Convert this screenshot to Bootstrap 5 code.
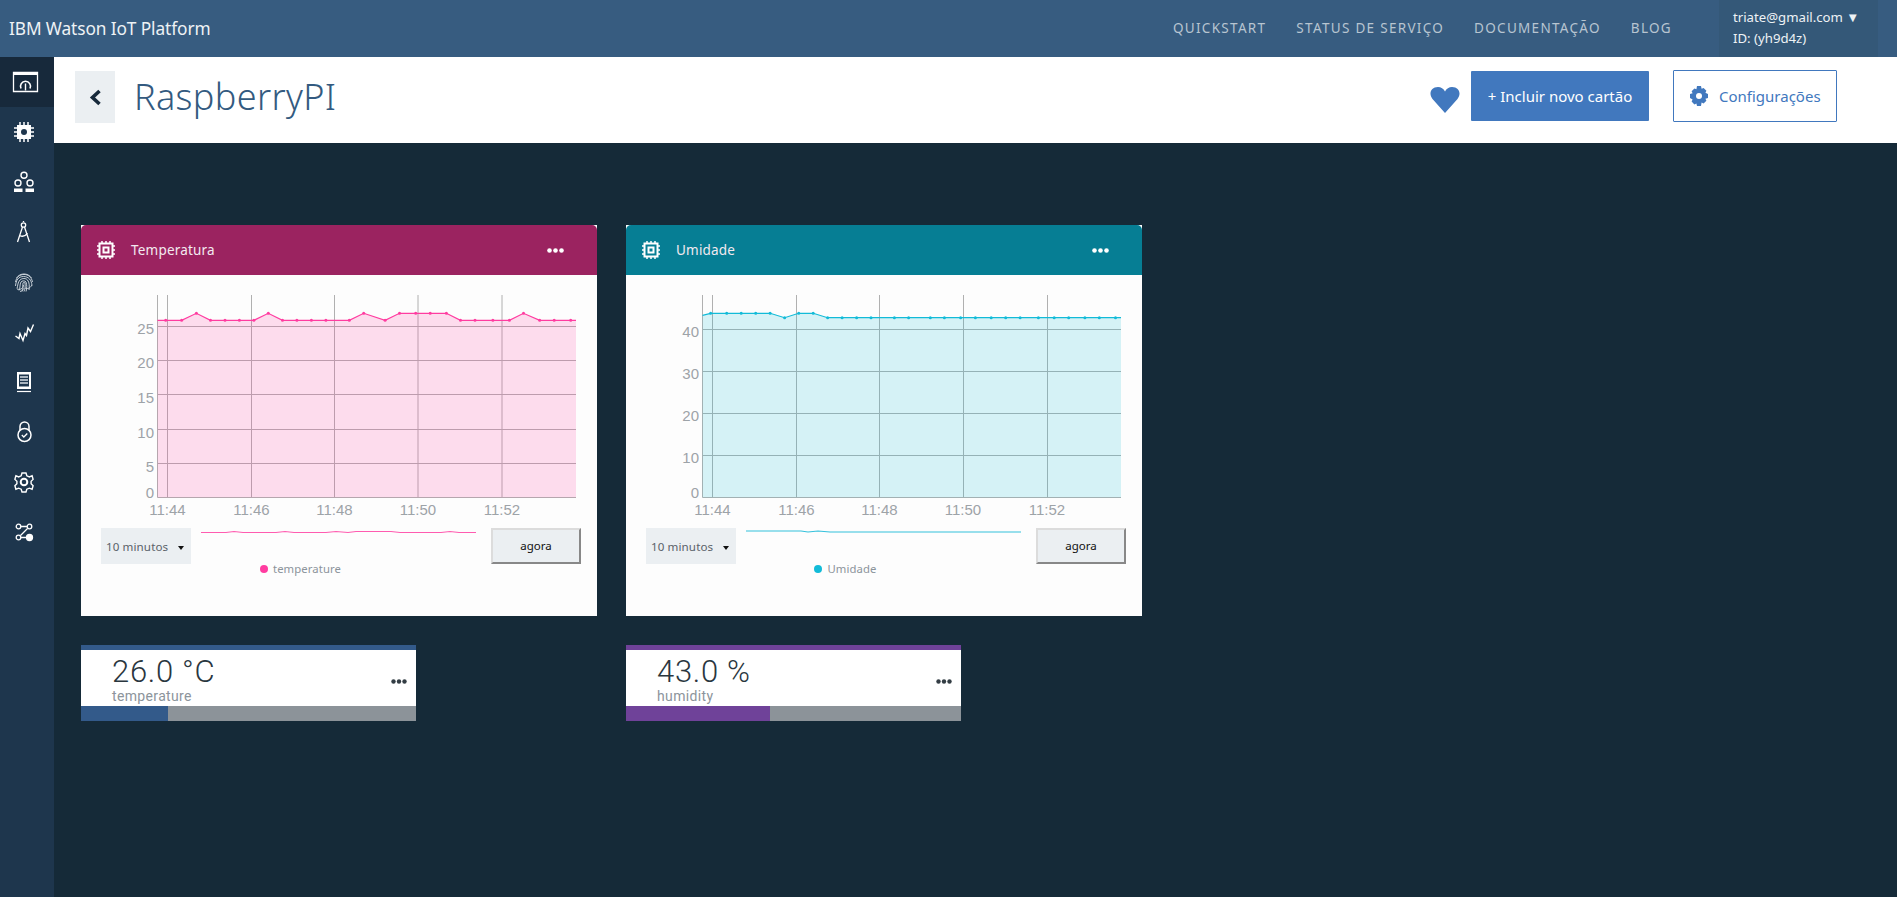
<!DOCTYPE html>
<html lang="pt-BR">
<head>
<meta charset="utf-8">
<title>RaspberryPI - IBM Watson IoT Platform</title>
<link rel="stylesheet" href="https://cdn.jsdelivr.net/npm/bootstrap@5.3.0/dist/css/bootstrap.min.css">
<script src="https://cdn.jsdelivr.net/npm/bootstrap@5.3.0/dist/js/bootstrap.bundle.min.js"></script>
<style>
html,body{height:100%}
body{background:#152a38;font-family:"Noto Sans",Roboto,sans-serif;overflow:hidden;color:#2d3a42}
.topbar{height:57px;background:#375c80;padding:0 19px 0 9px;flex-wrap:nowrap}
.topbar .navbar-brand{color:#eef2f5;font-size:17.3px;padding:0;margin:0;line-height:1;letter-spacing:-.1px}
.topnav{gap:30px;flex-direction:row;margin-right:47px}
.topnav .nav-link{color:#b8c5d1;font-size:13.5px;letter-spacing:1.3px;padding:0;line-height:1}
.userbox{width:159px;height:57px;background:#345878;color:#eef2f5;font-size:13.2px;line-height:21px;padding:7px 0 0 14px;white-space:nowrap}
.shell{height:840px}
.sidebar{width:54px;background:#1e364d;flex:none}
.sideitem{height:50px;padding-right:4px;display:flex;align-items:center;justify-content:center}
.sideitem.on{background:#17293b}
.sideitem svg{width:28px;height:24px;display:block}
.pagehead{height:86px;background:#fff;padding:14px 60px 0 21px;border:0}
.backbtn{width:40px;height:52px;background:#ebeff2;border:0;border-radius:0;padding:0;display:flex;align-items:center;justify-content:center}
.pagetitle{font-size:36px;line-height:52px;font-weight:300;color:#335a80;margin:0 0 0 19px;letter-spacing:.35px}
.heartmark{width:30px;height:26px;margin-right:11px;margin-top:16px}
.addbtn{width:178px;height:50px;background:#4178be;border:0;border-radius:1px;color:#fff;font-size:15px;padding:0}
.cfgbtn{width:164px;height:52px;background:#fff;border:1px solid #4178be;border-radius:1px;color:#4178be;font-size:15px;padding:0 0 0 15px;margin-left:24px;margin-top:-1px;justify-content:flex-start;gap:10px;white-space:nowrap}
.board{display:grid;grid-template-columns:516px 516px;gap:29px;padding:82px 0 0 27px;align-content:start}
.chartcard{height:391px;background:#fdfdfd;border:0;border-radius:0}
.cardtop{height:50px;color:#f3eaf0;font-size:13.5px;padding:0 0 0 16px;border:0;border-radius:0;letter-spacing:.2px}
.cardtop.rose{background:#9b2360}
.cardtop.teal{background:#067e94}
.cardtop .chipmark{width:18px;height:18px;margin-right:16px}
.dotsmark{width:17px;height:5px;margin:0 33px 0 auto;flex:none}
.plotarea{display:block;width:516px;height:253px}
.plotarea text{font-family:"Liberation Sans",Arial,sans-serif;font-size:15px;fill:#9da3a8}
.tick-y{text-anchor:end}
.tick-x{text-anchor:middle}
.rangerow{padding:0 0 0 20px;gap:10px;height:36px}
.rangepick{width:90px;height:36px;background:#ebeff2;font-size:11.6px;color:#5a6269;padding:1px 0 0 5px;position:relative;line-height:35px;letter-spacing:.1px}
.rangepick:after{content:"";position:absolute;right:7px;top:18px;border:3.5px solid transparent;border-top:4px solid #111;border-bottom:0}
.minimap{width:275px;height:8px;display:block;margin-right:5px}
.nowbtn{width:90px;height:36px;background:#ebeff2;border:2px solid;border-color:#dcdcdc #888 #888 #dcdcdc;border-radius:0;color:#111;font-size:11.5px;padding:0}
.legendline{padding-right:77px;height:10px;font-size:11.3px;line-height:10px;color:#8c949b;letter-spacing:.1px}
.legendline i{width:8px;height:8px;border-radius:50%;display:inline-block;margin-right:5px}
.statcard{width:335px;height:76px;background:#fff;border:0;border-radius:0}
.statline{height:5px}
.statbody{height:56px;padding:0 9px 0 31px}
.statvalue{font-family:Roboto,"Noto Sans",sans-serif;font-size:31px;line-height:29px;font-weight:300;color:#2a363e;margin-top:7px;letter-spacing:.7px}
.statname{font-family:Roboto,"Noto Sans",sans-serif;font-size:14px;line-height:17px;color:#8c949b;letter-spacing:.35px;margin-top:2px}
.statdots{width:16px;height:5px;margin:0;align-self:center;margin-top:6px;flex:none}
.statbar{height:15px;background:#8c9399;border-radius:0}
</style>
</head>
<body>
<nav class="navbar topbar justify-content-between">
  <a class="navbar-brand" href="#">IBM Watson IoT Platform</a>
  <div class="d-flex align-items-center">
    <ul class="nav topnav">
      <li class="nav-item"><a class="nav-link" href="#">QUICKSTART</a></li>
      <li class="nav-item"><a class="nav-link" href="#">STATUS DE SERVIÇO</a></li>
      <li class="nav-item"><a class="nav-link" href="#">DOCUMENTAÇÃO</a></li>
      <li class="nav-item"><a class="nav-link" href="#">BLOG</a></li>
    </ul>
    <div class="userbox">triate@gmail.com ▼<br>ID: (yh9d4z)</div>
  </div>
</nav>
<div class="d-flex shell">
  <aside class="sidebar">
    <div class="sideitem on"><svg viewBox="0 0 28 24" fill="none" stroke="#fff"><path d="M2.500 2.500h24v19h-24z" stroke-width="1.300"/><path d="M2 3.500h25" stroke-width="3"/><path d="M10 18.500a5 5 0 1 1 9 0" stroke-width="1.600"/><path d="M14.500 13.500v7" stroke-width="1.400"/></svg></div>
    <div class="sideitem"><svg viewBox="0 0 28 24" fill="none" stroke="#fff"><path d="M9 2v20M13 2v20M17 2v20M3 8h20M3 12h20M3 16h20" stroke-width="1.500"/><rect x="6" y="5" width="14" height="14" fill="#fff" stroke="none"/><circle cx="13" cy="12" r="3" fill="#1e364d" stroke="none"/></svg></div>
    <div class="sideitem"><svg viewBox="0 0 28 24" fill="none" stroke="#fff" stroke-width="1.400"><circle cx="13" cy="5.200" r="3"/><circle cx="7" cy="13" r="3"/><circle cx="19" cy="13" r="3"/><path d="M3 18.500h8.500v3.500H3zM14.500 18.500H23v3.500h-8.500z" fill="#fff" stroke="none"/></svg></div>
    <div class="sideitem"><svg viewBox="0 0 28 24" fill="none" stroke="#fff" stroke-width="1.300"><circle cx="12.500" cy="5" r="2.200"/><path d="M12.500 2V1M11.500 7L6.500 22M13.500 7L18.500 22M8.500 15.500c3 1.500 6 .5 8-2.500"/></svg></div>
    <div class="sideitem"><svg viewBox="0 0 28 24" fill="none" stroke="#d6dde3" stroke-width=".9"><path d="M5.500 8a9 9 0 0 1 15 0M4.500 12c1-5 4-7.500 8.500-7.500s7.500 2.500 8.500 7.500M4.500 16c.5-6 3-9.500 8-9.500s8 3.500 8.500 9M6 18.500c1-3 .5-6 3-8.500 2-2 6-2 7.500 0 2 2.500 2 6 1.500 10M8 20.500c1.500-3 .5-6 2-8.500 1-1.500 4-1.500 5 0 1 3 1 6 0 9.500M11 21.500c1.500-3 .5-6 1-8.500.5-1 1.500-1 2 0 .5 3 0 6-1 8.500M6 19c3 1 6 0 6.500-4M14 18c2 1 4.500 1 7-3M9 21.500c2-.5 3-1.500 3.500-3"/></svg></div>
    <div class="sideitem"><svg viewBox="0 0 28 24" fill="none" stroke="#fff" stroke-width="1.400"><path d="M4.500 16l3.500 2.500 1-5 3 7 2-7 1.500 2 1.500-7.500 2.500 3.500 3-7"/></svg></div>
    <div class="sideitem"><svg viewBox="0 0 28 24" fill="none"><path d="M6 2h14v17H6z" fill="#fff"/><path d="M8 4.500h10v12H8z" fill="#1e364d"/><path d="M9 7h8M9 10h8M9 13h8" stroke="#d6dde3" stroke-width="1.300"/><path d="M6 21.500h14" stroke="#fff" stroke-width="1.200"/></svg></div>
    <div class="sideitem"><svg viewBox="0 0 28 24" fill="none" stroke="#fff" stroke-width="1.500"><path d="M9 10V6.500a4.500 4.500 0 0 1 9 0V10"/><circle cx="13.500" cy="15" r="6.500"/><path d="M10.800 15l2 2 3.500-3.500" stroke-width="1.300"/></svg></div>
    <div class="sideitem"><svg viewBox="0 0 28 24" fill="none" stroke="#fff" stroke-width="1.400"><path d="M11 3h4l.8 2.800 2.600 1.100 2.700-1.200 1 3.700-2 1.900v2.500l2 1.900-1 3.600-2.700-1.100-2.600 1-.8 2.800h-4l-.8-2.800-2.600-1-2.700 1.100-1-3.600 2-1.900v-2.500l-2-1.900 1-3.700 2.700 1.200 2.600-1.100z"/><circle cx="13" cy="12" r="3.300" stroke-width="2"/></svg></div>
    <div class="sideitem"><svg viewBox="0 0 28 24" fill="none" stroke="#fff" stroke-width="1.300"><circle cx="7.500" cy="6.500" r="2.300"/><circle cx="18.500" cy="6.500" r="2.300"/><circle cx="7.500" cy="17.500" r="2.300"/><circle cx="18.500" cy="17.500" r="3" fill="#fff"/><path d="M10 6.500h6M10 17.500h5.500M9.500 15.500l7-7"/></svg></div>
  </aside>
  <main class="flex-grow-1 d-flex flex-column">
    <header class="pagehead d-flex align-items-start">
      <button class="backbtn" type="button" aria-label="Voltar"><svg width="13" height="17" viewBox="0 0 13 17"><path d="M10.500 2L3.500 8.500l7 6.500" fill="none" stroke="#17293b" stroke-width="3.600"/></svg></button>
      <h1 class="pagetitle">RaspberryPI</h1>
      <svg class="heartmark ms-auto" viewBox="0 0 30 26"><path d="M15 26L2.500 12C-1.500 7 .5 0 8 0c3 0 5.500 1.500 7 4.500C16.500 1.500 19 0 22 0c7.500 0 9.500 7 5.500 12z" fill="#4178be"/></svg>
      <button class="btn addbtn" type="button">+ Incluir novo cartão</button>
      <button class="btn cfgbtn d-flex align-items-center" type="button"><svg width="20" height="20" viewBox="0 0 20 20"><path d="M8 0h4l.6 2.800 2-.9 2.800 2.800-1 2.100L19 8v4l-2.600.7 1 2.100-2.800 2.800-2-1L12 20H8l-.6-2.600-2 1-2.800-2.800 1-2.100L1 12V8l2.600-.7-1-2.100 2.800-2.800 2 .9z" fill="#4178be"/><circle cx="10" cy="10" r="3" fill="#fff"/></svg>Configurações</button>
    </header>
    <section class="board">
      <div class="card chartcard">
        <div class="card-header cardtop rose d-flex align-items-center">
          <svg class="chipmark" viewBox="0 0 18 18" fill="none" stroke="#fff"><rect x="2.500" y="2.500" width="13" height="13" stroke-width="2"/><rect x="6.500" y="6.500" width="5" height="5" stroke-width="2"/><path d="M5 0v2M9 0v2M13 0v2M5 16v2M9 16v2M13 16v2M0 5h2M0 9h2M0 13h2M16 5h2M16 9h2M16 13h2" stroke-width="1.500"/></svg>
          <span>Temperatura</span>
          <svg class="dotsmark" viewBox="0 0 17 5" fill="#fff"><circle cx="2.500" cy="2.500" r="2.300"/><circle cx="8.500" cy="2.500" r="2.300"/><circle cx="14.500" cy="2.500" r="2.300"/></svg>
        </div>
        <svg class="plotarea" viewBox="0 0 516 253">
          <g stroke="#b0b0b0" stroke-width="1"><path d="M76.500 20V222.500M86.500 20V222.500M170.500 20V222.500M253.500 20V222.500M337 20V222.500M421 20V222.500M76.500 51.500H495M76.500 85.500H495M76.500 119.500H495M76.500 154.500H495M76.500 188.500H495M76.500 222.500H495"/></g>
          <path d="M76.500 45.300H84.700L100.600 45.300 115.400 38.300 129.500 45.300 144 45.300 158.400 45.300 172.900 45.300 187.300 38.300 201.500 45.300 215.900 45.300 230.400 45.300 244.900 45.300 268.300 45.300 282.700 38.300 304.100 45.300 318.500 38.300 334.700 38.300 349.200 38.300 365.400 38.300 379.500 45.300 394 45.300 411.900 45.300 428.400 45.300 442.500 38.300 458.700 45.300 473.200 45.300 489.700 45.300 495 45.300V222.500H76.500z" fill="#ff3ca0" fill-opacity=".17"/>
          <polyline fill="none" stroke="#ff3ca0" stroke-width="1.200" points="76.500,45.300 84.700,45.300 100.600,45.300 115.400,38.300 129.500,45.300 144,45.300 158.400,45.300 172.900,45.300 187.300,38.300 201.500,45.300 215.900,45.300 230.400,45.300 244.900,45.300 268.300,45.300 282.700,38.300 304.100,45.300 318.500,38.300 334.700,38.300 349.200,38.300 365.400,38.300 379.500,45.300 394,45.300 411.900,45.300 428.400,45.300 442.500,38.300 458.700,45.300 473.200,45.300 489.700,45.300 495,45.300"/>
          <g fill="#ff3ca0"><circle cx="84.700" cy="45.300" r="1.500"/><circle cx="100.600" cy="45.300" r="1.500"/><circle cx="115.400" cy="38.300" r="1.500"/><circle cx="129.500" cy="45.300" r="1.500"/><circle cx="144" cy="45.300" r="1.500"/><circle cx="158.400" cy="45.300" r="1.500"/><circle cx="172.900" cy="45.300" r="1.500"/><circle cx="187.300" cy="38.300" r="1.500"/><circle cx="201.500" cy="45.300" r="1.500"/><circle cx="215.900" cy="45.300" r="1.500"/><circle cx="230.400" cy="45.300" r="1.500"/><circle cx="244.900" cy="45.300" r="1.500"/><circle cx="268.300" cy="45.300" r="1.500"/><circle cx="282.700" cy="38.300" r="1.500"/><circle cx="304.100" cy="45.300" r="1.500"/><circle cx="318.500" cy="38.300" r="1.500"/><circle cx="334.700" cy="38.300" r="1.500"/><circle cx="349.200" cy="38.300" r="1.500"/><circle cx="365.400" cy="38.300" r="1.500"/><circle cx="379.500" cy="45.300" r="1.500"/><circle cx="394" cy="45.300" r="1.500"/><circle cx="411.900" cy="45.300" r="1.500"/><circle cx="428.400" cy="45.300" r="1.500"/><circle cx="442.500" cy="38.300" r="1.500"/><circle cx="458.700" cy="45.300" r="1.500"/><circle cx="473.200" cy="45.300" r="1.500"/><circle cx="489.700" cy="45.300" r="1.500"/></g>
          <text class="tick-y" x="73" y="59.300">25</text><text class="tick-y" x="73" y="93">20</text><text class="tick-y" x="73" y="127.800">15</text><text class="tick-y" x="73" y="162.700">10</text><text class="tick-y" x="73" y="196.700">5</text><text class="tick-y" x="73" y="223">0</text>
          <text class="tick-x" x="86.500" y="240.300">11:44</text><text class="tick-x" x="170.500" y="240.300">11:46</text><text class="tick-x" x="253.500" y="240.300">11:48</text><text class="tick-x" x="337" y="240.300">11:50</text><text class="tick-x" x="421" y="240.300">11:52</text>
        </svg>
        <div class="d-flex rangerow align-items-start">
          <div class="rangepick">10 minutos</div>
          <svg class="minimap" viewBox="0 0 275 8"><polyline fill="none" stroke="#ff5cb0" stroke-width="1.200" points="0,4.500 25,4.500 33,3.500 42,4.500 75,4.500 84,3.500 93,4.500 125,4.500 135,3.500 147,4.500 155,3.500 190,3.500 199,4.500 240,4.500 249,3.500 258,4.500 275,4.500"/></svg>
          <button class="nowbtn" type="button">agora</button>
        </div>
        <div class="legendline d-flex justify-content-center align-items-center"><i style="background:#ff3ca0"></i>temperature</div>
      </div>
      <div class="card chartcard">
        <div class="card-header cardtop teal d-flex align-items-center">
          <svg class="chipmark" viewBox="0 0 18 18" fill="none" stroke="#fff"><rect x="2.500" y="2.500" width="13" height="13" stroke-width="2"/><rect x="6.500" y="6.500" width="5" height="5" stroke-width="2"/><path d="M5 0v2M9 0v2M13 0v2M5 16v2M9 16v2M13 16v2M0 5h2M0 9h2M0 13h2M16 5h2M16 9h2M16 13h2" stroke-width="1.500"/></svg>
          <span>Umidade</span>
          <svg class="dotsmark" viewBox="0 0 17 5" fill="#fff"><circle cx="2.500" cy="2.500" r="2.300"/><circle cx="8.500" cy="2.500" r="2.300"/><circle cx="14.500" cy="2.500" r="2.300"/></svg>
        </div>
        <svg class="plotarea" viewBox="0 0 516 253">
          <g stroke="#b0b0b0" stroke-width="1"><path d="M76.500 20V222.500M86.500 20V222.500M170.500 20V222.500M253.500 20V222.500M337.500 20V222.500M421.500 20V222.500M76.500 54.500H495M76.500 96.500H495M76.500 138.500H495M76.500 180.500H495M76.500 222.500H495"/></g>
          <path d="M76.500 40.300L84.600 38.300 144.100 38.300 158.600 42.700 172.700 38.300 187.200 38.300 201.600 42.700 495 42.700V222.500H76.500z" fill="#12bbd8" fill-opacity=".17"/>
          <polyline fill="none" stroke="#12bbd8" stroke-width="1.200" points="76.500,40.300 84.600,38.300 100.700,38.300 115.200,38.300 129.700,38.300 144.100,38.300 158.600,42.700 172.700,38.300 187.200,38.300 201.600,42.700 495,42.700"/>
          <g fill="#12bbd8"><circle cx="84.600" cy="38.300" r="1.500"/><circle cx="100.700" cy="38.300" r="1.500"/><circle cx="115.200" cy="38.300" r="1.500"/><circle cx="129.700" cy="38.300" r="1.500"/><circle cx="144.100" cy="38.300" r="1.500"/><circle cx="158.600" cy="42.700" r="1.500"/><circle cx="172.700" cy="38.300" r="1.500"/><circle cx="187.200" cy="38.300" r="1.500"/><circle cx="201.600" cy="42.700" r="1.500"/><circle cx="216.100" cy="42.700" r="1.500"/><circle cx="230.600" cy="42.700" r="1.500"/><circle cx="245" cy="42.700" r="1.500"/><circle cx="268.400" cy="42.700" r="1.500"/><circle cx="282.600" cy="42.700" r="1.500"/><circle cx="304.300" cy="42.700" r="1.500"/><circle cx="318.400" cy="42.700" r="1.500"/><circle cx="334.600" cy="42.700" r="1.500"/><circle cx="349.400" cy="42.700" r="1.500"/><circle cx="365.200" cy="42.700" r="1.500"/><circle cx="379.700" cy="42.700" r="1.500"/><circle cx="394.100" cy="42.700" r="1.500"/><circle cx="412.400" cy="42.700" r="1.500"/><circle cx="428.200" cy="42.700" r="1.500"/><circle cx="442.700" cy="42.700" r="1.500"/><circle cx="458.900" cy="42.700" r="1.500"/><circle cx="473.300" cy="42.700" r="1.500"/><circle cx="489.500" cy="42.700" r="1.500"/></g>
          <text class="tick-y" x="73" y="62">40</text><text class="tick-y" x="73" y="104">30</text><text class="tick-y" x="73" y="145.700">20</text><text class="tick-y" x="73" y="187.700">10</text><text class="tick-y" x="73" y="223">0</text>
          <text class="tick-x" x="86.500" y="240.300">11:44</text><text class="tick-x" x="170.500" y="240.300">11:46</text><text class="tick-x" x="253.500" y="240.300">11:48</text><text class="tick-x" x="337" y="240.300">11:50</text><text class="tick-x" x="421" y="240.300">11:52</text>
        </svg>
        <div class="d-flex rangerow align-items-start">
          <div class="rangepick">10 minutos</div>
          <svg class="minimap" viewBox="0 0 275 8"><polyline fill="none" stroke="#35c1dc" stroke-width="1.200" points="0,3 55,3 62,4 72,3 84,4 275,4"/></svg>
          <button class="nowbtn" type="button">agora</button>
        </div>
        <div class="legendline d-flex justify-content-center align-items-center"><i style="background:#12bbd8"></i>Umidade</div>
      </div>
      <div class="card statcard">
        <div class="statline" style="background:#335a8a"></div>
        <div class="d-flex justify-content-between statbody">
          <div><div class="statvalue">26.0 °C</div><div class="statname">temperature</div></div>
          <svg class="statdots" viewBox="0 0 16 5" fill="#333d44"><circle cx="2.500" cy="2.500" r="2.200"/><circle cx="8" cy="2.500" r="2.200"/><circle cx="13.500" cy="2.500" r="2.200"/></svg>
        </div>
        <div class="progress statbar"><div class="progress-bar" style="width:26%;background:#335a8a"></div></div>
      </div>
      <div class="card statcard">
        <div class="statline" style="background:#6f4299"></div>
        <div class="d-flex justify-content-between statbody">
          <div><div class="statvalue">43.0 %</div><div class="statname">humidity</div></div>
          <svg class="statdots" viewBox="0 0 16 5" fill="#333d44"><circle cx="2.500" cy="2.500" r="2.200"/><circle cx="8" cy="2.500" r="2.200"/><circle cx="13.500" cy="2.500" r="2.200"/></svg>
        </div>
        <div class="progress statbar"><div class="progress-bar" style="width:43%;background:#6f4299"></div></div>
      </div>
    </section>
  </main>
</div>
</body>
</html>
